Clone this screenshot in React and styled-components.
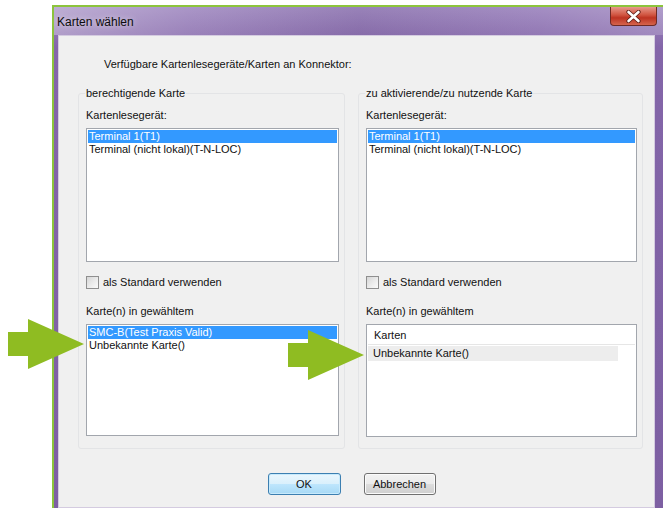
import React from 'react';
import styled, { createGlobalStyle } from 'styled-components';

const GlobalStyle = createGlobalStyle`
  html, body { margin: 0; padding: 0; background: #ffffff; }
  body { font-family: "Liberation Sans", Arial, sans-serif; color: #111; }
  * { box-sizing: border-box; }
`;

const Page = styled.div`
  position: relative;
  width: 663px;
  height: 508px;
  overflow: hidden;
  background: #ffffff;
  padding: 5px 0 0 52px;
`;

const Window = styled.div`
  width: 611px;
  height: 506px;
  border-top: 2px solid #8cc43c;
  border-left: 2px solid #8cc43c;
  background: linear-gradient(180deg, #9f88c0 0px, #8466a9 40px, #7d5fa2 100%);
  display: flex;
  flex-direction: column;
`;

const TitleBar = styled.div`
  height: 28px;
  display: flex;
  align-items: flex-start;
  padding-left: 3px;
  background: linear-gradient(
    90deg,
    rgba(255, 255, 255, 0.32) 0%,
    rgba(255, 255, 255, 0.12) 22%,
    rgba(0, 0, 0, 0.04) 50%,
    rgba(255, 255, 255, 0.06) 80%,
    rgba(255, 255, 255, 0.18) 100%
  );
`;

const Title = styled.span`
  font-size: 12px;
  line-height: 16px;
  margin-top: 7px;
  color: #0c0c0c;
  text-shadow: 0 0 6px rgba(255, 255, 255, 0.7);
`;

const CloseButton = styled.div`
  margin-left: auto;
  margin-right: 6px;
  width: 47px;
  height: 19px;
  border: 1px solid #6e2a24;
  border-top: none;
  border-radius: 0 0 4px 4px;
  background: linear-gradient(180deg, #e7998c 0%, #d0533f 45%, #bd3322 60%, #d5644c 100%);
  display: flex;
  align-items: center;
  justify-content: center;
`;

const FrameBody = styled.div`
  flex: 1;
  display: flex;
  padding: 0 8px 3px 4px;
`;

const Client = styled.div`
  flex: 1;
  display: flex;
  flex-direction: column;
  background: #f0f0f0;
  border: 1px solid #d4cbe0;
`;

const Heading = styled.div`
  font-size: 11px;
  line-height: 14px;
  margin: 21px 0 0 45px;
`;

const Groups = styled.div`
  display: flex;
  gap: 13px;
  margin: 15px 0 0 19px;
`;

const Group = styled.fieldset`
  margin: 0;
  width: ${(p) => p.$w}px;
  padding: 0 5px 11px 7px;
  border: 1px solid #e3e4e6;
  border-radius: 3px;
  display: flex;
  flex-direction: column;
  min-width: 0;
`;

const Legend = styled.legend`
  font-size: 11px;
  line-height: 14px;
  padding: 0 1px;
  margin-left: -1px;
`;

const FieldLabel = styled.div`
  font-size: 11px;
  line-height: 14px;
  margin-top: ${(p) => p.$top}px;
`;

const ListBox = styled.div`
  margin-top: 6px;
  height: ${(p) => p.$h}px;
  background: #ffffff;
  border: 1px solid #a2a6ad;
  padding: 1px;
  overflow: hidden;
`;

const ListItem = styled.div`
  font-size: 11px;
  line-height: 13px;
  height: 13px;
  padding-left: 1px;
  white-space: nowrap;
  color: ${(p) => (p.$selected ? '#ffffff' : '#111111')};
  background: ${(p) => (p.$selected ? '#3399ff' : 'transparent')};
`;

const ColumnHeader = styled.div`
  font-size: 11px;
  line-height: 18px;
  height: 19px;
  padding-left: 6px;
  border-bottom: 1px solid #e6e6e6;
  color: #111;
`;

const ListRow = styled.div`
  width: 250px;
  font-size: 11px;
  line-height: 15px;
  height: 15px;
  margin-top: 1px;
  padding-left: 5px;
  background: #ededed;
  color: #111;
`;

const CheckRow = styled.label`
  display: flex;
  align-items: center;
  gap: 4px;
  margin-top: 13px;
  height: 14px;
  font-size: 11px;
  line-height: 14px;
`;

const CheckBox = styled.span`
  width: 13px;
  height: 13px;
  border: 1px solid #8f8f8f;
  background: linear-gradient(135deg, #d6d6d6 0%, #ececec 55%, #fafafa 100%);
`;

const ButtonRow = styled.div`
  display: flex;
  justify-content: center;
  gap: 23px;
  margin-top: 24px;
  padding-right: 10px;
`;

const Button = styled.div`
  width: ${(p) => p.$w}px;
  height: 22px;
  border-radius: 3px;
  font-size: 11px;
  display: flex;
  align-items: center;
  justify-content: center;
  color: #111;
  border: 1px solid ${(p) => (p.$primary ? '#3c7fb1' : '#707070')};
  box-shadow: inset 0 0 0 1px ${(p) => (p.$primary ? '#c7eafc' : '#fbfbfb')};
  background: ${(p) =>
    p.$primary
      ? 'linear-gradient(180deg, #eaf6fd 0%, #d9f0fc 50%, #bee6fd 51%, #a7d9f5 100%)'
      : 'linear-gradient(180deg, #f2f2f2 0%, #ebebeb 50%, #dddddd 51%, #cfcfcf 100%)'};
`;

const Arrow = styled.svg`
  position: absolute;
  left: ${(p) => p.$x}px;
  top: ${(p) => p.$y}px;
`;

const ARROW_GREEN = '#8fbc22';

function GreenArrow({ x, y }) {
  return (
    <Arrow $x={x} $y={y} width="78" height="50" viewBox="0 0 78 50">
      <polygon points="0,13 20,13 20,0 76,25 20,50 20,37 0,37" fill={ARROW_GREEN} />
    </Arrow>
  );
}

function CloseGlyph() {
  return (
    <svg width="15" height="13" viewBox="0 0 15 13">
      <path d="M2.5 2 L12.5 11 M12.5 2 L2.5 11" stroke="#5a1b14" strokeWidth="4.2" strokeLinecap="round" />
      <path d="M2.5 2 L12.5 11 M12.5 2 L2.5 11" stroke="#ffffff" strokeWidth="2.6" strokeLinecap="round" />
    </svg>
  );
}

function CardGroup({ title, width, readers, bottom }) {
  return (
    <Group $w={width}>
      <Legend>{title}</Legend>
      <FieldLabel $top={8}>Kartenlesegerät:</FieldLabel>
      <ListBox $h={134}>
        {readers.map((r, i) => (
          <ListItem key={r} $selected={i === 0}>{r}</ListItem>
        ))}
      </ListBox>
      <CheckRow>
        <CheckBox />
        als Standard verwenden
      </CheckRow>
      <FieldLabel $top={15}>Karte(n) in gewähltem</FieldLabel>
      {bottom}
    </Group>
  );
}

const readers = ['Terminal 1(T1)', 'Terminal (nicht lokal)(T-N-LOC)'];

export default function App() {
  return (
    <>
      <GlobalStyle />
      <Page>
        <Window>
          <TitleBar>
            <Title>Karten wählen</Title>
            <CloseButton>
              <CloseGlyph />
            </CloseButton>
          </TitleBar>
          <FrameBody>
            <Client>
              <Heading>Verfügbare Kartenlesegeräte/Karten an Konnektor:</Heading>
              <Groups>
                <CardGroup
                  title="berechtigende Karte"
                  width={267}
                  readers={readers}
                  bottom={
                    <ListBox $h={112}>
                      <ListItem $selected>SMC-B(Test Praxis Valid)</ListItem>
                      <ListItem>Unbekannte Karte()</ListItem>
                    </ListBox>
                  }
                />
                <CardGroup
                  title="zu aktivierende/zu nutzende Karte"
                  width={285}
                  readers={readers}
                  bottom={
                    <ListBox $h={113}>
                      <ColumnHeader>Karten</ColumnHeader>
                      <ListRow>Unbekannte Karte()</ListRow>
                    </ListBox>
                  }
                />
              </Groups>
              <ButtonRow>
                <Button $primary $w={73}>OK</Button>
                <Button $w={72}>Abbrechen</Button>
              </ButtonRow>
            </Client>
          </FrameBody>
        </Window>
        <GreenArrow x={8} y={319} />
        <GreenArrow x={288} y={330} />
      </Page>
    </>
  );
}
